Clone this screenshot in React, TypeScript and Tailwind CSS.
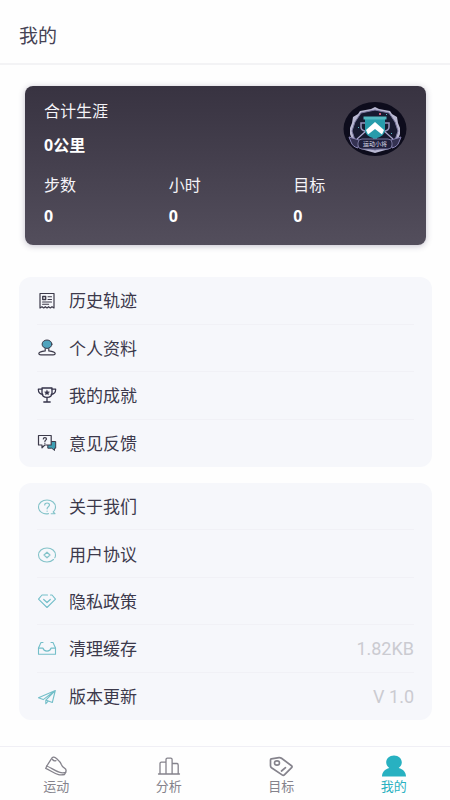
import type { ReactNode } from "react";
import clsx from "clsx";

interface MenuItem {
  label: string;
  icon: ReactNode;
  value?: string;
}

interface TabItem {
  label: string;
  icon: ReactNode;
  active?: boolean;
}

interface IconProps {
  className: string;
  children: ReactNode;
}

function MenuIcon({ className, children }: IconProps) {
  return (
    <svg
      viewBox="0 0 20 20"
      fill="none"
      stroke="currentColor"
      strokeLinecap="round"
      strokeLinejoin="round"
      className={clsx("w-5 h-5 shrink-0", className)}
      aria-hidden="true"
    >
      {children}
    </svg>
  );
}

function TabIcon({ children }: { children: ReactNode }) {
  return (
    <svg
      viewBox="0 0 26 22"
      fill="none"
      stroke="currentColor"
      strokeWidth="1.3"
      strokeLinecap="round"
      strokeLinejoin="round"
      className="w-[26px] h-[22px]"
      aria-hidden="true"
    >
      {children}
    </svg>
  );
}

const stats = [
  { label: "步数", value: "0" },
  { label: "小时", value: "0" },
  { label: "目标", value: "0" },
];

const recordMenu: MenuItem[] = [
  {
    label: "历史轨迹",
    icon: (
      <MenuIcon className="text-[#3c3a4a]">
        <path d="M3 2.500h14v14.500l-2-1.300-1.700 1.300-1.700-1.300-1.600 1.300-1.700-1.300-1.600 1.300-1.700-1.300L3 17z" strokeWidth="1.200" />
        <path d="M5.700 5.500h3v3h-3z" strokeWidth="1.300" />
        <path d="M11 5.800h3.500M11 8.500h3.500M5.600 11h8.900M5.600 13.200h6" strokeWidth="1.100" />
      </MenuIcon>
    ),
  },
  {
    label: "个人资料",
    icon: (
      <MenuIcon className="text-[#3c3a4a]">
        <path d="M8.200 9.500v2.400c-3.600.5-6.400 1.400-6.400 2.700 0 1 .8 1.300 2 1.300h12.400c1.200 0 2-.3 2-1.300 0-1.300-2.800-2.200-6.400-2.700V9.500" strokeWidth="1.200" />
        <ellipse cx="10" cy="5.200" rx="4.900" ry="4.200" fill="#4fa3bd" strokeWidth="1" />
      </MenuIcon>
    ),
  },
  {
    label: "我的成就",
    icon: (
      <MenuIcon className="text-[#35334a]">
        <path d="M5 2h10v4.800c0 2.700-2 4.600-5 4.600S5 9.500 5 6.800zM10 11.500v4.400M6.800 16h6.400" strokeWidth="1.300" />
        <path d="M5 3.200H1.300c0 2.800 1.500 4.800 4.500 5.200M15 3.200h3.700c0 2.800-1.500 4.800-4.500 5.200" strokeWidth="1.200" />
        <path d="M10 4.200l.8 1.500 1.700.2-1.200 1.100.3 1.700-1.600-.8-1.600.8.300-1.700-1.200-1.100 1.700-.2z" fill="currentColor" strokeWidth=".4" />
      </MenuIcon>
    ),
  },
  {
    label: "意见反馈",
    icon: (
      <MenuIcon className="text-[#3c3a4a]">
        <path d="M13 7.500h5.700v6.700h-1.200v2.300l-2.700-2.300h-4v-3.700z" fill="#3d9fb3" strokeWidth="1" />
        <path d="M1.500 1.500h12.700v9.500H7.800L5 13.800V11H1.500z" fill="#f6f7fb" strokeWidth="1.200" />
        <path d="M6.300 5c0-2 3.200-1.900 3.200-.1 0 1.200-1.600 1.300-1.600 2.500M7.900 9.200v.1" strokeWidth="1.200" />
      </MenuIcon>
    ),
  },
];

const systemMenu: MenuItem[] = [
  {
    label: "关于我们",
    icon: (
      <MenuIcon className="text-[#84c3c9]">
        <path d="M11.500 16.600C6 17.700 1.500 14.500 1.500 10c0-4 3.700-7 8.500-7s8.500 3 8.500 7c0 2-.8 3.700-2.300 5l1.800 1.700h-3.800" strokeWidth="1.100" />
        <path d="M7.700 8c0-2.700 4.800-2.700 4.800.1 0 1.700-2.400 1.800-2.400 3.700M10.100 14v.2" strokeWidth="1.200" />
      </MenuIcon>
    ),
  },
  {
    label: "用户协议",
    icon: (
      <MenuIcon className="text-[#84c3c9]">
        <path d="M16.500 14.500c-1.500 1.500-3.800 2.500-6.500 2.500-4.800 0-8.500-3-8.500-7s3.700-7 8.500-7 8.500 3 8.500 7c0 1-.2 2-.7 2.800" strokeWidth="1.100" />
        <path d="M10 7.200 13 10l-3 2.800L7 10z" strokeWidth="1.200" />
      </MenuIcon>
    ),
  },
  {
    label: "隐私政策",
    icon: (
      <MenuIcon className="text-[#74bfc9]">
        <path d="M10.500 3H5L1.500 7.200 10 15.500l8.500-8.300L15 3h-1.500" strokeWidth="1.100" />
        <path d="m6.700 7.500 3.300 3 3.300-3" strokeWidth="1.200" />
      </MenuIcon>
    ),
  },
  {
    label: "清理缓存",
    value: "1.82KB",
    icon: (
      <MenuIcon className="text-[#74bfc9]">
        <path d="M6 3.500H4L1.500 9v6.200h17V9L16 3.500h-2" strokeWidth="1.100" />
        <path d="M1.500 9.200H6c.4 2 1.800 2.900 4 2.900s3.600-.9 4-2.900h4.500" strokeWidth="1.200" />
      </MenuIcon>
    ),
  },
  {
    label: "版本更新",
    value: "V 1.0",
    icon: (
      <MenuIcon className="text-[#74bfc9]">
        <path d="M18.300 3.500 1.500 10.800l4.700 1.800zM18.300 3.500l-3 12-5.800-2.200M18.300 3.500l-9.500 9.600v3.600l2.400-2.600" strokeWidth="1.100" />
      </MenuIcon>
    ),
  },
];

const tabs: TabItem[] = [
  {
    label: "运动",
    icon: (
      <TabIcon>
        <path d="M8.500 3.600c1-1.700 2.600-2 4-.9.900.7 1.700 1.600 2.500 2.200 1.500 1.200 2.500 2.400 3.200 4.300.8 2 1.800 3.300 3.300 4 1.700.8 1.900 2.400 1.100 4.200-2 .8-4.400.6-6.500-.2C11.500 15.500 8 12.700 3.800 11z" />
        <path d="M3.800 11 2.700 13.400c4.300 1.800 8.300 5.200 12.800 6.200 2 .4 4.300.3 6-.1l1.100-2.100M9.500 4.500c1 1.300 2 1.800 3.400 1.100" />
      </TabIcon>
    ),
  },
  {
    label: "分析",
    icon: (
      <TabIcon>
        <path d="M2.500 19h21M4 19V8.500c0-1 .4-1.400 1.400-1.400H10M10 19V4.500c0-1 .4-1.400 1.400-1.400h3.300c1 0 1.400.4 1.400 1.400V19M16.100 8.500h4.700c1 0 1.400.4 1.400 1.400V19" />
      </TabIcon>
    ),
  },
  {
    label: "目标",
    icon: (
      <TabIcon>
        <path d="M3.300 3.900 11 2.700c1-.1 1.700 0 2.500.6l10 7.400c.8.600.8 1.300.1 2l-7 7c-.8.800-1.600.8-2.500.2L3.500 12.700c-.8-.6-1-1.200-1-2V5c0-.7.200-1 .8-1.100z" strokeWidth="1.700" />
        <ellipse cx="9" cy="8" rx="2.500" ry="2.100" strokeWidth="1.600" />
        <path d="m13.500 16 4-3.300" strokeWidth="1.700" />
      </TabIcon>
    ),
  },
  {
    label: "我的",
    active: true,
    icon: (
      <TabIcon>
        <path
          d="M13 .5c-4.600 0-7.800 3-7.800 6.800 0 2.500 1.200 4.300 3.100 5.600C4 14.100 1 17 1 21.500h24c0-4.500-3-7.400-7.300-8.600 1.900-1.300 3.100-3.100 3.100-5.600C20.800 3.500 17.600.5 13 .5z"
          fill="currentColor"
          stroke="none"
        />
      </TabIcon>
    ),
  },
];

function Badge() {
  return (
    <svg viewBox="0 0 64 54" className="w-16 h-[54px] shrink-0" role="img" aria-label="徽章">
      <ellipse cx="32" cy="27" rx="31.500" ry="27" fill="#0d0c1c" />
      <path
        d="m32 5 4 2 11 2 2 3 5 3 1 6 2 5v6l-3 8-8 7-14 4-14-4-8-7-3-8v-6l2-5 1-6 5-3 2-3 11-2z"
        fill="#b9b8d2"
      />
      <path
        d="M32 8 46 11l6 9 3 9-3 9-8 7-12 3-12-3-8-7-3-9 3-9 6-9z"
        fill="#171a30"
        stroke="#77749b"
        strokeWidth="1"
      />
      <path d="m14 37 9-8M50 37l-9-8" stroke="#aaa6cd" strokeWidth="1.200" />
      <path
        d="M22 21h-4v4c0 3 2 4 6 4.500M42 21h4v4c0 3-2 4-6 4.500"
        fill="none"
        stroke="#9895bd"
        strokeWidth="1.500"
      />
      <path d="M22 16h20v12c0 4-4 7-8 8v3h-4v-3c-4-1-8-4-8-8z" fill="#279cab" />
      <path d="M20.500 14.500h23v3h-23z" fill="#55bac2" />
      <path d="m32 20 9 8-2 4.500-7-5.500-7 5.500-2-4.500z" fill="#fff" />
      <path d="m6 35 10 3-1 8c-4-1-6-3-7-6zM58 35l-10 3 1 8c4-1 6-3 7-6z" fill="#343252" stroke="#8985b5" />
      <rect x="15" y="37" width="34" height="10" rx="4" fill="#20203b" stroke="#77749c" />
      <path d="M36 11h2v2h-2z" fill="#c85d7a" />
      <path d="M15 25h1v1h-1zM48 31h1v1h-1zM43 12h1v1h-1z" fill="#55bac2" />
      <text
        x="32"
        y="44"
        textAnchor="middle"
        fontSize="6"
        fontFamily="Noto Sans CJK SC, sans-serif"
        fill="#deddeb"
      >
        运动小将
      </text>
    </svg>
  );
}

function MenuCard({ items, className }: { items: MenuItem[]; className: string }) {
  return (
    <ul className={clsx("grid auto-rows-fr rounded-xl bg-[#f6f7fb] px-[18px]", className)}>
      {items.map((item) => (
        <li key={item.label} className="border-b border-[#f1f1f6] last:border-b-0">
          <button type="button" className="flex h-full w-full items-center pt-0.5 text-left">
            {item.icon}
            <span className="ml-3 flex-1 text-[17px] leading-6 text-[#3c394b]">
              {item.label}
            </span>
            {item.value && (
              <span className="text-lg leading-6 text-[#cbcbd1]">{item.value}</span>
            )}
          </button>
        </li>
      ))}
    </ul>
  );
}

export default function App() {
  return (
    <div className="flex min-h-screen flex-col bg-[#fefefe] font-[Roboto,'Noto_Sans_CJK_SC',sans-serif]">
      <header className="border-b-2 border-[#f3f3f5] px-[19px] pt-[22px] pb-[11px]">
        <h1 className="text-[19px] leading-[30px] text-[#464354]">我的</h1>
      </header>

      <main className="flex-1 pl-[19px] pr-[18px]">
        <section className="mx-[6px] mt-[21px] rounded-lg bg-linear-to-b from-[#383341] to-[#534e5c] pt-4 pr-2 pb-[19px] pl-[19px] text-[#f5f4f8] shadow-[0_1px_6px_rgba(60,50,90,0.3)]">
          <div className="flex items-start justify-between pr-[11px]">
            <div className="flex flex-col gap-[13px]">
              <h2 className="text-base leading-5">合计生涯</h2>
              <p className="font-['Noto_Sans','Noto_Sans_CJK_SC',sans-serif] text-base leading-5 font-bold text-white">
                0公里
              </p>
            </div>
            <Badge />
          </div>
          <dl className="mt-5 grid grid-cols-3">
            {stats.map((stat) => (
              <div key={stat.label} className="flex flex-col gap-[10px]">
                <dt className="text-base leading-5">{stat.label}</dt>
                <dd className="font-['Noto_Sans','Noto_Sans_CJK_SC',sans-serif] text-base leading-5 font-bold text-white">
                  {stat.value}
                </dd>
              </div>
            ))}
          </dl>
        </section>

        <MenuCard items={recordMenu} className="mt-8 min-h-[190px]" />
        <MenuCard items={systemMenu} className="mt-4 min-h-[237px]" />
      </main>

      <nav className="grid grid-cols-4 border-t border-[#f0eff5] pt-2 pb-[3px]">
        {tabs.map((tab) => (
          <button
            key={tab.label}
            type="button"
            aria-current={tab.active ? "page" : undefined}
            className={clsx(
              "flex flex-col items-center text-[13px] leading-5",
              tab.active ? "text-[#28b1c1]" : "text-[#85838c]"
            )}
          >
            {tab.icon}
            <span>{tab.label}</span>
          </button>
        ))}
      </nav>
    </div>
  );
}
